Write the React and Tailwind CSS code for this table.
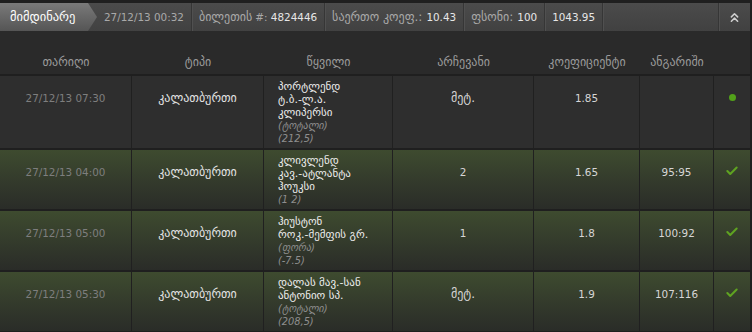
import React from 'react';
import { ChevronsUp, Check } from 'lucide-react';

const cols = ['w-[132px]', 'w-[132px]', 'w-[129px]', 'w-[141px]', 'w-[106px]', 'w-[74px]', 'w-[36px]'];

const bets = [
  {
    date: '27/12/13 07:30',
    pair: ['პორტლენდ', 'ტ.ბ.-ლ.ა.', 'კლიპერსი'],
    market: '(ტოტალი)',
    line: '(212,5)',
    pick: 'მეტ.',
    odd: '1.85',
    score: '',
    state: 'live',
  },
  {
    date: '27/12/13 04:00',
    pair: ['კლივლენდ', 'კავ.-ატლანტა', 'ჰოუკსი'],
    market: null,
    line: '(1 2)',
    pick: '2',
    odd: '1.65',
    score: '95:95',
    state: 'won',
  },
  {
    date: '27/12/13 05:00',
    pair: ['ჰიუსტონ', 'როკ.-მემფის გრ.'],
    market: '(ფორა)',
    line: '(-7.5)',
    pick: '1',
    odd: '1.8',
    score: '100:92',
    state: 'won',
  },
  {
    date: '27/12/13 05:30',
    pair: ['დალას მავ.-სან', 'ანტონიო სპ.'],
    market: '(ტოტალი)',
    line: '(208,5)',
    pick: 'მეტ.',
    odd: '1.9',
    score: '107:116',
    state: 'won',
  },
];

const headers = ['თარიღი', 'ტიპი', 'წყვილი', 'არჩევანი', 'კოეფიციენტი', 'ანგარიში', ''];

function Sep() {
  return <div className="w-[1px] self-stretch bg-[#363636] shadow-[1px_0_0_#505050]" />;
}

function Info({ label, value }) {
  return (
    <div className="flex items-center px-[7px] text-[10.4px] text-[#a9a9a9] whitespace-nowrap">
      {label && <span className="text-[12px]">{label}</span>}
      {value && <span className="ml-[4px] text-[#e6e6e6]">{value}</span>}
    </div>
  );
}

export default function App() {
  return (
    <div
      className="w-[752px] h-[332px] overflow-hidden bg-[#1f1f1f] pt-[3px] pr-[2px] leading-none"
      style={{ fontFamily: '"DejaVu Sans", "Noto Sans", sans-serif' }}
    >
      {/* Top status bar */}
      <div className="flex h-[29px] bg-gradient-to-b from-[#4b4b4b] to-[#414141] border-b border-[#2a2a2a]">
        <div className="flex items-center w-[97px] pl-[10px] text-[12.5px] text-white bg-gradient-to-b from-[#7a7a7a] to-[#555555] [clip-path:polygon(0_0,88px_0,97px_50%,88px_100%,0_100%)]">
          მიმდინარე
        </div>
        <div className="flex items-center px-[7px] text-[10.4px] text-[#a9a9a9] whitespace-nowrap">27/12/13 00:32</div>
        <Sep />
        <Info label="ბილეთის" value={<><span className="-ml-[1px] text-[#a9a9a9]">#: </span>4824446</>} />
        <Sep />
        <Info label="საერთო კოეფ.:" value="10.43" />
        <Sep />
        <Info label="ფსონი:" value="100" />
        <Sep />
        <div className="flex items-center px-[7px] text-[10.4px] text-[#e6e6e6]">1043.95</div>
        <Sep />
        <div className="flex-1" />
        <Sep />
        <div className="flex w-[31px] items-center justify-center text-[#cfcfcf]">
          <ChevronsUp size={15} strokeWidth={2.5} />
        </div>
      </div>

      {/* Column headers */}
      <div className="flex h-[44px] bg-[#2a2a2a] border-b-2 border-[#1f1f1f]">
        {headers.map((h, i) => (
          <div key={i} className={`${cols[i]} flex items-end justify-center pb-[6px] text-[12px] text-[#9b9b9b]`}>
            {h}
          </div>
        ))}
      </div>

      {/* Rows */}
      <div className="flex flex-col gap-[2px]">
        {bets.map((b, r) => (
          <div
            key={r}
            className={`flex ${
              b.state === 'live'
                ? 'bg-[#2e2e2e]'
                : 'bg-gradient-to-b from-[#3e4b2f] to-[#2a2c28]'
            }`}
          >
            <div className={`${cols[0]} border-r border-[#202020] pt-[17px] text-center text-[10.4px] text-[#7e7e7e]`}>
              {b.date}
            </div>
            <div className={`${cols[1]} border-r border-[#202020] pt-[16px] text-center text-[12px] text-[#e2e2e2]`}>
              კალათბურთი
            </div>
            <div className={`${cols[2]} border-r border-[#202020] pl-[14px] pt-[4px] pb-[3px]`}>
              {b.pair.map((l, i) => (
                <div key={i} className="text-[11px] leading-[13px] text-[#ececec] whitespace-nowrap">
                  {l}
                </div>
              ))}
              {b.market && (
                <div className="text-[10px] leading-[13px] italic text-[#8e8e8e] whitespace-nowrap">{b.market}</div>
              )}
              <div className="text-[9.8px] leading-[13px] italic text-[#8e8e8e] whitespace-nowrap">{b.line}</div>
            </div>
            <div
              className={`${cols[3]} border-r border-[#202020] pt-[16px] text-center text-[#d6d6d6] ${
                b.pick === 'მეტ.' ? 'text-[12px]' : 'text-[10.4px] pt-[17px]'
              }`}
            >
              {b.pick}
            </div>
            <div className={`${cols[4]} border-r border-[#202020] pt-[17px] text-center text-[10.4px] text-[#d6d6d6]`}>
              {b.odd}
            </div>
            <div className={`${cols[5]} border-r border-[#202020] pt-[17px] text-center text-[10.4px] text-[#d6d6d6]`}>
              {b.score}
            </div>
            <div className={`${cols[6]} flex justify-center pt-[14px]`}>
              {b.state === 'live' ? (
                <div className="mt-[4px] h-[7px] w-[7px] rounded-full bg-[#52a11a]" />
              ) : (
                <Check size={14} strokeWidth={3.5} className="text-[#5fa321]" />
              )}
            </div>
          </div>
        ))}
      </div>
    </div>
  );
}
